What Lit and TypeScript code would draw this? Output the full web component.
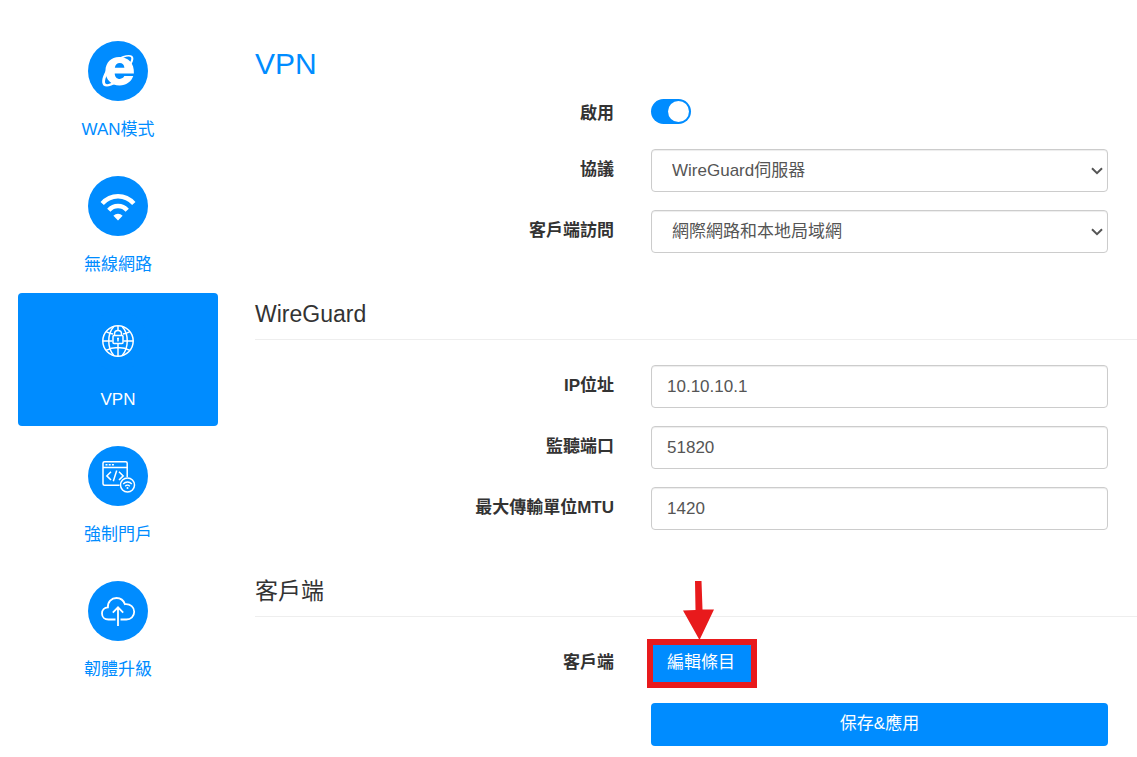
import { LitElement, html, css, svg } from "lit";
import { customElement, property, state } from "lit/decorators.js";
import { classMap } from "lit/directives/class-map.js";

const icons = {
  wan: svg`
    <path fill="currentColor" fill-rule="evenodd" d="M30 16.6C21.5 16.6 15.500 22 15.300 30.500C15.200 38.800 21.500 45 30.500 45C37.600 45 43.200 41.500 45.200 35.700H35.600C34.700 37.500 32.900 38.500 30.800 38.500C27.500 38.500 25.400 36.300 25.300 33H45.900C46.500 23 40 16.600 30 16.600ZM25.400 27.300C25.800 24.500 27.800 22.700 30.700 22.700C33.600 22.700 35.500 24.500 35.700 27.300Z" transform="translate(3.200 -.6) scale(.93 1)"/>
    <path fill="currentColor" fill-rule="evenodd" d="M42.500 24.500C46.800 18.500 46.400 13.900 40.800 13.900C33.500 14 24.500 19.800 19.500 27C14.500 34.300 12.700 41.500 15.500 44.400C18 46.600 23.500 45.200 28 42L25.500 40.500C21.800 43.300 18.600 44 17.500 42.600C16.200 40.800 17.600 35.500 21.500 29.500L24 25.500C28 20.500 34.500 16 40.500 15.600C44.200 15.500 44.200 18.500 41 23Z"/>`,
  wifi: svg`
    <g fill="none" stroke="currentColor" stroke-width="4.400">
      <path d="M14.200 27.500C22.800 17.800 37.200 17.800 45.800 27.500"/>
      <path d="M20.800 34.200C25.800 28.600 34.200 28.600 39.200 34.200"/>
    </g>
    <path fill="currentColor" d="M25.400 39.800C27.900 36.900 32.100 36.900 34.600 39.800L30 44.500Z"/>`,
  vpn: svg`
    <g fill="none" stroke="currentColor" stroke-width="1.500">
      <circle cx="30" cy="30" r="15.200"/>
      <path d="M30 14.700V19M30 33V45.300M14.700 30H24.500M35.500 30H45.300M18 20.700C20.500 22 22.500 22.600 25 23M35 23C37.500 22.600 39.500 22 42 20.700M18 39.300C25 35.600 35 35.600 42 39.300"/>
      <path d="M26 15.300C19 23 19 37 26 44.700M34 15.300C41 23 41 37 34 44.700"/>
      <path d="M26.500 24.500V22.800C26.500 18.400 33.500 18.400 33.500 22.800V24.500"/>
      <rect x="25" y="24.500" width="10" height="8" rx="1"/>
      <path d="M30 27V30.500M29 27.500H31"/>
    </g>`,
  portal: svg`
    <g fill="none" stroke="currentColor" stroke-width="1.500">
      <path d="M31.500 39.300H16.500Q15 39.300 15 37.800V17.200Q15 15.700 16.500 15.700H37.700Q39.200 15.700 39.200 17.200V31"/>
      <path d="M15 21.500H39.200"/>
      <path stroke-dasharray="2 1.200" d="M17.500 18.700H26.500"/>
      <path d="M23 25.800L18.800 29.900L23 34M31 25.800L35.200 29.900L31 34M28.700 24.500L25.300 35.200"/>
      <circle cx="39.500" cy="39" r="7"/>
      <path stroke-width="1.300" d="M35.200 38C37.600 35.300 41.400 35.300 43.800 38M37.200 40.200C38.500 38.700 40.500 38.700 41.800 40.200"/>
    </g>
    <circle cx="39.500" cy="41.900" r="1" fill="currentColor"/>`,
  upgrade: svg`
    <g fill="none" stroke="currentColor" stroke-width="1.800">
      <path d="M27.500 38.500H20.500C16.600 38.500 14 35.900 14 32.400C14 29 16.400 26.500 19.900 26.300C19.600 20.800 23.500 17 28.500 17C32.800 17 35.600 19.300 36.900 23.200C42.600 22.700 46.200 26.200 46.200 30.800C46.200 35.400 42.800 38.500 38.400 38.500H32.500"/>
      <path d="M30 45V26.500M24.800 31.700L30 26.300L35.200 31.700"/>
    </g>`,
};

type IconName = keyof typeof icons;

@customElement("nav-tile")
export class NavTile extends LitElement {
  @property() icon: IconName = "wan";
  @property() label = "";
  @property({ type: Boolean }) active = false;

  static styles = css`
    :host {
      display: block;
    }
    .tile {
      display: flex;
      flex-direction: column;
      align-items: center;
      gap: 17px;
      padding: 18px 0 14px;
      border-radius: 4px;
      color: #008cff;
      text-decoration: none;
      font-size: 17px;
      line-height: 24px;
    }
    .active {
      background: #008cff;
      color: #fff;
    }
    .disc {
      width: 60px;
      height: 60px;
      border-radius: 50%;
      background: #008cff;
      color: #fff;
    }
  `;

  render() {
    return html`<a class=${classMap({ tile: true, active: this.active })} href="#${this.icon}">
      <svg class="disc" viewBox="0 0 60 60" aria-hidden="true">${icons[this.icon]}</svg>
      <span>${this.label}</span>
    </a>`;
  }
}

@customElement("app-root")
export class AppRoot extends LitElement {
  @state() private enabled = true;

  private tiles: { icon: IconName; label: string }[] = [
    { icon: "wan", label: "WAN模式" },
    { icon: "wifi", label: "無線網路" },
    { icon: "vpn", label: "VPN" },
    { icon: "portal", label: "強制門戶" },
    { icon: "upgrade", label: "韌體升級" },
  ];

  static styles = css`
    :host {
      display: block;
      font-family: "Liberation Sans", "Noto Sans CJK TC", sans-serif;
      font-size: 17px;
      line-height: 24px;
      color: #333;
      background: #fff;
    }
    * {
      box-sizing: border-box;
    }
    .page {
      display: grid;
      grid-template-columns: 200px minmax(0, 1fr);
      column-gap: 37px;
      padding-left: 18px;
    }
    .side {
      display: flex;
      flex-direction: column;
      gap: 2px;
      padding-top: 23px;
    }
    .main {
      padding: 48px 0 11px;
    }
    h1,
    h2 {
      margin: 0;
      font-weight: 400;
    }
    h1 {
      font-size: 30px;
      line-height: 32px;
      color: #008cff;
    }
    h2 {
      font-size: 23px;
      line-height: 28px;
      margin-top: 47px;
      padding-bottom: 11px;
      border-bottom: 1px solid #eee;
    }
    .rows {
      display: grid;
      row-gap: 18px;
      margin-top: 25px;
    }
    .top {
      margin-top: 13px;
    }
    .row {
      display: grid;
      grid-template-columns: minmax(0, 11fr) minmax(0, 14fr);
      column-gap: 37px;
      padding-right: 29px;
      align-items: start;
    }
    .name {
      padding-top: 9px;
      text-align: right;
      font-weight: 700;
    }
    .field {
      width: 100%;
      height: 43px;
      padding: 0 15px;
      border: 1px solid #ccc;
      border-radius: 4px;
      background-color: #fff;
      box-shadow: inset 0 1px 1px rgba(0, 0, 0, 0.075);
      font: inherit;
      color: #555;
    }
    .select {
      appearance: none;
      padding: 0 20px;
      background-image: url("data:image/svg+xml,%3Csvg xmlns='http://www.w3.org/2000/svg' width='12' height='8'%3E%3Cpath d='M1 1.200L6 6.200L11 1.200' fill='none' stroke='%23555' stroke-width='2'/%3E%3C/svg%3E");
      background-repeat: no-repeat;
      background-position: right 4px center;
    }
    .switch {
      appearance: none;
      display: block;
      width: 40px;
      height: 25px;
      margin: 6px 0 7px;
      padding: 2px;
      border-radius: 13px;
      background: #ccc;
    }
    .switch::before {
      content: "";
      display: block;
      width: 21px;
      height: 21px;
      border-radius: 50%;
      background: #fff;
    }
    .switch:checked {
      background: #008cff;
    }
    .switch:checked::before {
      margin-left: auto;
    }
    .button {
      display: block;
      height: 43px;
      padding: 0 16px 2px;
      border: 0;
      border-radius: 4px;
      background: #008cff;
      color: #fff;
      font: inherit;
    }
    .wide {
      width: 100%;
    }
    .marked {
      position: relative;
      justify-self: start;
    }
    .frame {
      position: absolute;
      inset: -3px -6px -3px -4px;
      border: 6px solid #e81a1c;
      pointer-events: none;
    }
    .arrow {
      position: absolute;
      left: 50%;
      bottom: 100%;
      width: 32px;
      height: 61px;
      margin-left: -18px;
      pointer-events: none;
    }
  `;

  private textRow(id: string, name: string, value: string) {
    return html`<div class="row">
      <label class="name" for=${id}>${name}</label>
      <input class="field" id=${id} type="text" .value=${value} />
    </div>`;
  }

  private selectRow(id: string, name: string, value: string) {
    return html`<div class="row">
      <label class="name" for=${id}>${name}</label>
      <select class="field select" id=${id}><option>${value}</option></select>
    </div>`;
  }

  render() {
    return html`<div class="page">
      <nav class="side">
        ${this.tiles.map(
          (t) => html`<nav-tile icon=${t.icon} label=${t.label} ?active=${t.icon === "vpn"}></nav-tile>`
        )}
      </nav>
      <main class="main">
        <h1>VPN</h1>
        <div class="rows top">
          <div class="row">
            <label class="name" for="enabled">啟用</label>
            <input
              class="switch"
              id="enabled"
              type="checkbox"
              .checked=${this.enabled}
              @change=${(e: Event) => (this.enabled = (e.target as HTMLInputElement).checked)}
            />
          </div>
          ${this.selectRow("protocol", "協議", "WireGuard伺服器")}
          ${this.selectRow("access", "客戶端訪問", "網際網路和本地局域網")}
        </div>

        <h2>WireGuard</h2>
        <div class="rows">
          ${this.textRow("ip", "IP位址", "10.10.10.1")}
          ${this.textRow("port", "監聽端口", "51820")}
          ${this.textRow("mtu", "最大傳輸單位MTU", "1420")}
        </div>

        <h2>客戶端</h2>
        <div class="rows">
          <div class="row">
            <label class="name" for="edit">客戶端</label>
            <div class="marked">
              <button class="button" id="edit" type="button">編輯條目</button>
              <span class="frame"></span>
              <svg class="arrow" viewBox="0 0 32 61" aria-hidden="true">
                <path fill="#e81a1c" d="M12 0H18.500L19.500 28.500L31 28.500L16.500 59L0 29.500L12.500 29Z" />
              </svg>
            </div>
          </div>
          <div class="row">
            <span></span>
            <button class="button wide" type="submit">保存&amp;應用</button>
          </div>
        </div>
      </main>
    </div>`;
  }
}
